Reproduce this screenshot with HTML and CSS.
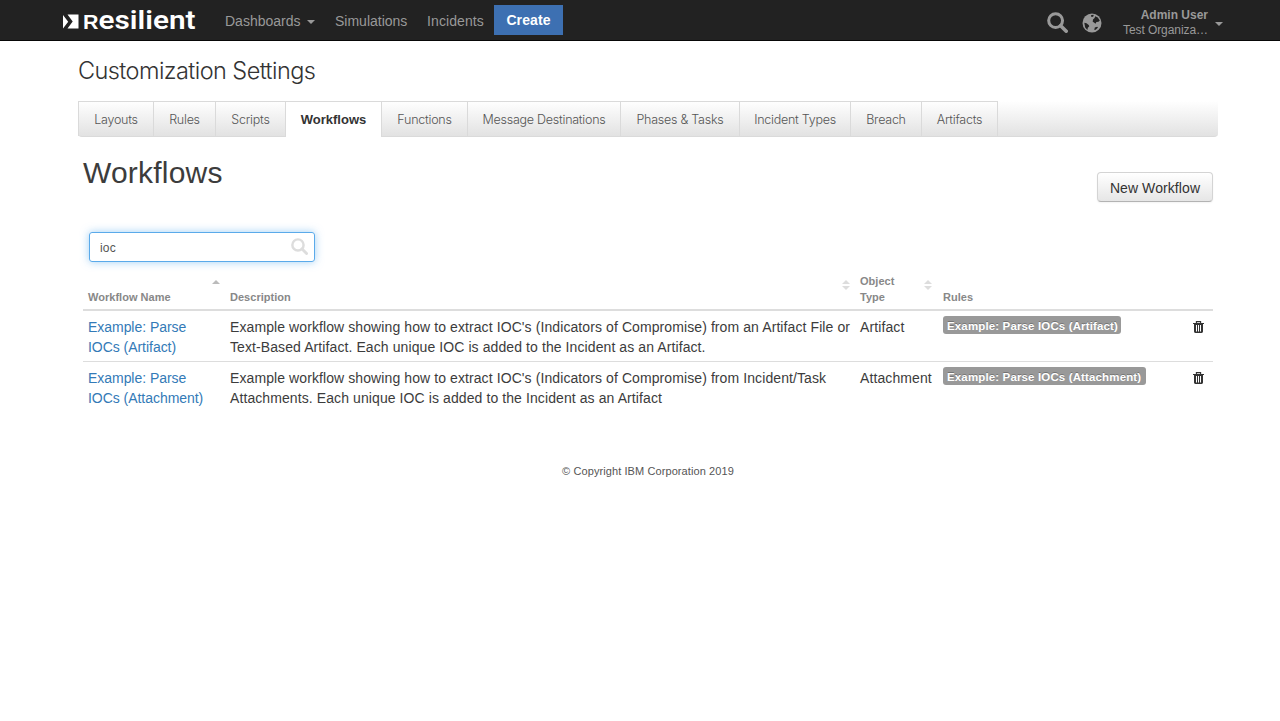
FILE: index.html
```html
<!DOCTYPE html>
<html lang="en">
<head>
<meta charset="utf-8">
<title>Customization Settings</title>
<link rel="stylesheet" href="styles.css">
</head>
<body>
<svg class="defs" aria-hidden="true">
  <symbol id="search" viewBox="0 0 20 20"><circle cx="8.2" cy="8.2" r="6.6" fill="none" stroke="currentColor" stroke-width="2.9"/><path d="M13 13l5.3 5.3" stroke="currentColor" stroke-width="3.4" stroke-linecap="round"/></symbol>
  <symbol id="trash" viewBox="0 0 11 12"><path d="M3.4 2V.6h4.2V2" fill="none" stroke="currentColor" stroke-width="1.1"/><path fill="currentColor" fill-rule="evenodd" d="M0 2h11v1.1h-1V10.600q0 1.400-1.300 1.400H2.300Q1 12 1 10.600V3.100H0zM3 4v6.400h1V4zM5 4v6.400h1V4zM7 4v6.400h1V4z"/></symbol>
</svg>
<header class="navbar">
  <a class="brand">
    <svg width="136" height="38" viewBox="0 0 136 38">
      <path fill="#fff" d="M0 15l5.200 6.700L0 28.500zM4.500 14.500H15.500v14H4.500l5.200-7z"/>
      <text class="wordmark" x="20" y="28.500" textLength="15.500" lengthAdjust="spacingAndGlyphs">R</text>
      <text class="wordmark wordmark-rest" x="35.500" y="28.500" textLength="97" lengthAdjust="spacingAndGlyphs">esilient</text>
    </svg>
  </a>
  <nav class="nav">
    <a class="nav-dash">Dashboards <i class="caret"></i></a>
    <a class="nav-sim">Simulations</a>
    <a class="nav-inc">Incidents</a>
    <a class="create">Create</a>
  </nav>
  <div class="tools">
    <svg class="tool-search"><use href="#search"/></svg>
    <svg class="globe" viewBox="0 0 20 20"><circle cx="10" cy="10" r="9.500" fill="#999"/><path fill="#222" d="M9 2.200l2.200-.4.600 1.100-1.500 1.100-1.300-.4zM11 6.600l1.600-1.700.6-1.700 2.600 1.200 2 3.100-1.300 1.200-2.100.3-.9 1.700-1.500-1.200-1.300-.7zM2.300 9.800l2.200.4 2.200 1.700.6 1.400-1.500 1.500-.4 2.200-2.200-2.600zM12.800 14.600l2.400-.9.800.8-2.300 2.200-1.400.4z"/></svg>
    <div class="account"><b>Admin User</b><span>Test Organiza…</span></div>
    <i class="caret"></i>
  </div>
</header>
<main class="page">
  <h1>Customization Settings</h1>
  <div class="tabs">
    <a>Layouts</a><a>Rules</a><a>Scripts</a><a class="active">Workflows</a><a>Functions</a><a>Message Destinations</a><a>Phases &amp; Tasks</a><a>Incident Types</a><a>Breach</a><a class="last">Artifacts</a>
  </div>
  <section class="content">
    <div class="heading"><h2>Workflows</h2><button class="new">New Workflow</button></div>
    <label class="search"><span>ioc</span><svg><use href="#search"/></svg></label>
    <table>
      <colgroup><col class="c-name"><col class="c-desc"><col class="c-type"><col class="c-rules"><col class="c-del"></colgroup>
      <thead><tr>
        <th>Workflow Name<i class="sort asc"></i></th>
        <th>Description<i class="sort both"></i></th>
        <th>Object<br>Type<i class="sort both"></i></th>
        <th>Rules</th><th></th>
      </tr></thead>
      <tbody>
        <tr><td><a>Example: Parse<br>IOCs (Artifact)</a></td><td class="desc">Example workflow showing how to extract IOC's (Indicators of Compromise) from an Artifact File or<br>Text-Based Artifact. Each unique IOC is added to the Incident as an Artifact.</td><td class="type">Artifact</td><td><span class="tag">Example: Parse IOCs (Artifact)</span></td><td><svg class="trash"><use href="#trash"/></svg></td></tr>
        <tr><td><a>Example: Parse<br>IOCs (Attachment)</a></td><td class="desc">Example workflow showing how to extract IOC's (Indicators of Compromise) from Incident/Task<br>Attachments. Each unique IOC is added to the Incident as an Artifact</td><td class="type">Attachment</td><td><span class="tag tag-wide">Example: Parse IOCs (Attachment)</span></td><td><svg class="trash"><use href="#trash"/></svg></td></tr>
      </tbody>
    </table>
  </section>
  <footer>© Copyright IBM Corporation 2019</footer>
</main>
</body>
</html>
```
FILE: styles.css
```css
* { box-sizing: border-box; }
body { margin: 0; background: #fff; color: #3c3c3c; font: 14px/20px "Liberation Sans", Arial, sans-serif; }
.defs { position: absolute; width: 0; height: 0; }
.navbar { height: 41px; background: #222; border-bottom: 1px solid #080808; display: flex; padding-left: 63px; color: #999; }
.brand { width: 152px; height: 40px; }
.brand svg { display: block; overflow: visible; }
.wordmark { font: 700 20px "Liberation Sans", Arial, sans-serif; fill: #fff; }
.wordmark-rest { font: 600 26px Roboto, sans-serif; }
.nav { display: flex; align-items: flex-start; }
.nav a { padding: 11px 10px 0; white-space: nowrap; }
.nav .nav-dash { width: 110px; }
.nav .nav-sim { width: 92px; padding-right: 0; }
.nav .nav-inc { width: 77px; letter-spacing: .1px; }
.nav .create { width: 69px; height: 30px; margin-top: 5px; padding: 5px 0 0; text-align: center; background: #3d70b2; color: #fff; font-weight: 700; letter-spacing: .1px; }
.caret { display: inline-block; border: 4px solid transparent; border-top-color: #999; border-bottom: 0; vertical-align: middle; margin-left: 3px; }
.tools { margin-left: auto; display: flex; padding-right: 57px; }
.tool-search { width: 21px; height: 21px; margin: 12px 14px 0 0; }
.globe { width: 20px; height: 20px; margin: 13px 21px 0 0; }
.account { width: 85px; padding-top: 8px; font-size: 12px; line-height: 15px; display: flex; flex-direction: column; text-align: left; }
.account b { align-self: flex-end; }
.account span { letter-spacing: -.08px; white-space: nowrap; }
.tools .caret { margin: 22px 0 0 7px; height: 4px; }
.page { width: 1140px; margin-left: 78px; }
h1 { margin: 0; height: 60px; padding-top: 15px; font: 300 23.500px/30px Inter, "Liberation Sans", sans-serif; letter-spacing: -.57px; color: #333; }
.tabs { height: 36px; display: grid; grid-template-columns: 75px 62px 70px 96px 86px 153px 119px 111px 71px 77px; background: linear-gradient(#fff, #e2e2e2); border-bottom: 1px solid #dadada; border-radius: 0 0 4px 4px; }
.tabs a { border: 1px solid #dadada; border-width: 1px 0 0 1px; height: 35px; padding-top: 8px; text-align: center; font: 300 12.500px/20px Inter, sans-serif; letter-spacing: -.25px; color: #555; white-space: nowrap; }
.tabs .active { height: 36px; background: #fff; color: #333; font: 700 13px/20px "Liberation Sans", sans-serif; letter-spacing: 0; }
.tabs .last { border-right-width: 1px; }
.content { padding: 0 5px; }
.heading { height: 95px; display: flex; justify-content: space-between; padding-top: 16px; }
h2 { margin: 0; font-weight: 400; font-size: 30px; line-height: 40px; letter-spacing: .2px; }
.new { width: 116px; height: 30px; margin-top: 19px; padding: 2px 0 0; font: 14px/20px "Liberation Sans", sans-serif; letter-spacing: .08px; color: #333; border: 1px solid #d4d4d4; border-bottom-color: #b3b3b3; border-radius: 4px; background: linear-gradient(#fff, #e6e6e6); box-shadow: 0 1px 2px rgba(0,0,0,.05); }
.search { display: flex; justify-content: space-between; width: 226px; height: 30px; margin-left: 6px; padding: 5px 6px 0 10px; border: 1px solid #5aaaea; border-radius: 3px; box-shadow: 0 0 8px rgba(82,168,236,.55); font-size: 12px; letter-spacing: .2px; color: #555; }
.search svg { width: 17px; height: 17px; color: #ddd; }
table { width: 1130px; margin-top: 7px; table-layout: fixed; border-collapse: separate; border-spacing: 0; }
.c-name { width: 142px; } .c-desc { width: 630px; } .c-type { width: 83px; } .c-rules { width: 250px; } .c-del { width: 25px; }
th { position: relative; height: 42px; padding: 4px 5px; vertical-align: bottom; text-align: left; font-size: 11px; line-height: 16px; color: #888; border-bottom: 2px solid #ddd; letter-spacing: .03px; }
td { height: 51px; padding: 6px 0 4px 5px; vertical-align: top; white-space: nowrap; }
tbody tr:first-child td { border-bottom: 1px solid #ddd; }
td a { color: #337ab7; letter-spacing: -.04px; }
.desc { letter-spacing: .092px; }
.type { letter-spacing: .1px; }
.sort { position: absolute; right: 5px; top: 11px; width: 8px; height: 4px; background: #bbb; clip-path: polygon(50% 0, 100% 100%, 0 100%); }
.both { height: 10px; right: 5px; background: #ddd; clip-path: polygon(50% 0, 100% 40%, 0 40%, 0 60%, 100% 60%, 50% 100%, 0 60%, 0 40%); }
th:nth-child(3) .both { right: 6px; }
.tag { display: block; width: 178px; height: 18px; margin-top: -1px; padding: 2px 4px; border-radius: 3px; background: #999; color: #fff; font-size: 11.500px; line-height: 16px; font-weight: 700; letter-spacing: .14px; text-shadow: 0 -1px 0 rgba(0,0,0,.25); }
.tag-wide { width: 203px; }
.trash { display: block; width: 11px; height: 12px; margin-top: 4px; color: #333; }
footer { margin-top: 48px; text-align: center; font-size: 11px; letter-spacing: .09px; color: #555; }
```
